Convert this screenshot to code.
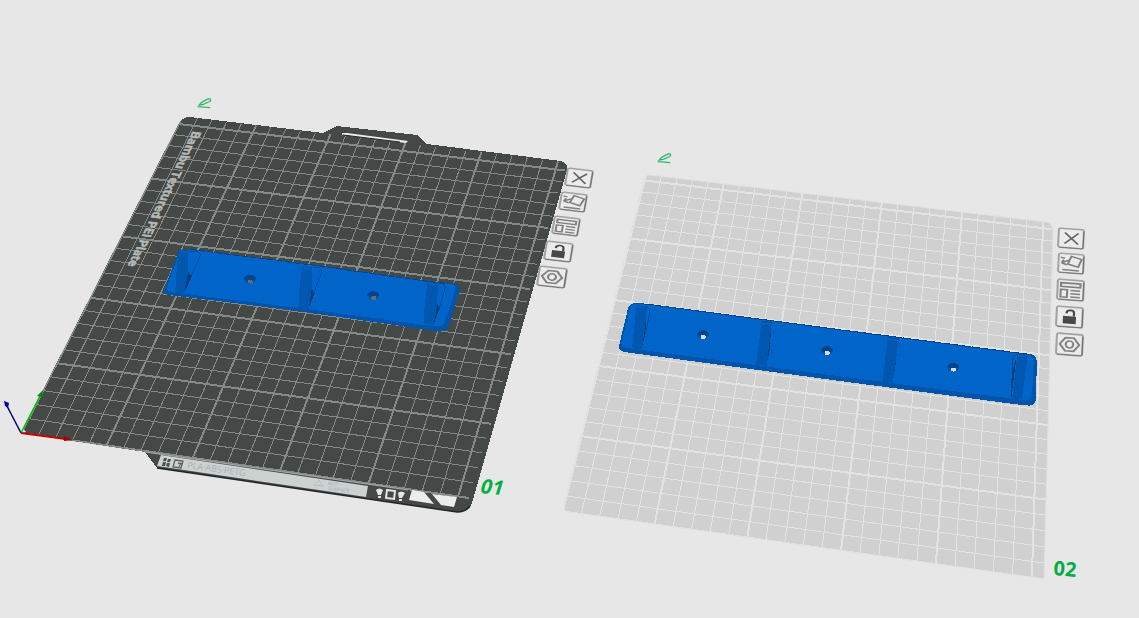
import type { ReactNode } from "react";

type Point = [number, number];
type Quad = [Point, Point, Point, Point];

const VIEW_W = 1139;
const VIEW_H = 618;

// Bed size in millimetres covered by the reference corners
const BED_X = 256;
const BED_Y = 250;

// Projects bed coordinates to the screen; corners are origin, +x, +x+y, +y
function createProjection([p0, p1, p2, p3]: Quad) {
  const dx1 = p1[0] - p2[0];
  const dx2 = p3[0] - p2[0];
  const dx3 = p0[0] - p1[0] + p2[0] - p3[0];
  const dy1 = p1[1] - p2[1];
  const dy2 = p3[1] - p2[1];
  const dy3 = p0[1] - p1[1] + p2[1] - p3[1];
  const det = dx1 * dy2 - dx2 * dy1;
  const g = (dx3 * dy2 - dx2 * dy3) / det;
  const h = (dx1 * dy3 - dx3 * dy1) / det;
  const a = p1[0] - p0[0] + g * p1[0];
  const b = p3[0] - p0[0] + h * p3[0];
  const d = p1[1] - p0[1] + g * p1[1];
  const e = p3[1] - p0[1] + h * p3[1];

  return (x: number, y: number): Point => {
    const u = x / BED_X;
    const v = y / BED_Y;
    const w = g * u + h * v + 1;
    return [(a * u + b * v + p0[0]) / w, (d * u + e * v + p0[1]) / w];
  };
}

const STEPS = Array.from({ length: 26 }, (_, i) => i * 10);

interface BedGridProps {
  corners: Quad;
  color: string;
  clipId: string;
}

function BedGrid({ corners, color, clipId }: BedGridProps) {
  const project = createProjection(corners);

  const line = (key: string, from: Point, to: Point, major: boolean) => (
    <line
      key={key}
      x1={from[0]}
      y1={from[1]}
      x2={to[0]}
      y2={to[1]}
      stroke={color}
      strokeWidth={major ? 2 : 1}
    />
  );

  return (
    <g clipPath={`url(#${clipId})`} shapeRendering="crispEdges">
      {STEPS.map((s) => line(`x${s}`, project(s, 0), project(s, 257), s % 50 === 0))}
      {STEPS.map((s) => line(`y${s}`, project(0, s), project(256, s), s % 50 === 0))}
    </g>
  );
}

const PLATE_1: Quad = [[21.5, 433], [469, 498], [565, 170.5], [179, 124]];
const PLATE_2: Quad = [[563, 511.5], [1043.5, 579.5], [1052.7, 229.3], [644.5, 180.5]];

const PLATE_1_PATH =
  "M21 433 L178 125 Q182 117 190 117 L323 133 L337 126 L417 135 L427 144 L561 161 Q568 163 567 170 L472 503 Q468 513 457 512 L157 468 L145 452 Z";
const PLATE_2_PATH =
  "M564 505 L644 180 Q645 175 650 175 L1046 222 Q1053 223 1053 231 L1044 579 L569 512 Q563 511 564 505 Z";

interface PostProps {
  body: string;
  cap: string;
  shadow: string;
  groove: string;
}

function Post({ body, cap, shadow, groove }: PostProps) {
  return (
    <g>
      <polyline points={groove} fill="none" stroke="#004a96" strokeWidth="2.5" />
      <polygon points={shadow} fill="#003c7a" />
      <polygon points={body} fill="#0057b0" />
      <polygon points={cap} fill="#0061c2" stroke="#004a96" strokeWidth="1.5" />
    </g>
  );
}

function Hole({ x, y, fill }: { x: number; y: number; fill: string }) {
  return (
    <g>
      <ellipse cx={x} cy={y} rx="18" ry="13" fill="#0055aa" />
      <path d={`M${x - 18} ${y - 2}q2 -11 18 -11t18 11l-9 6l-18 0z`} fill="#00458c" />
      <ellipse cx={x + 1} cy={y + 7} rx="8" ry="6" fill={fill} />
    </g>
  );
}

function ShortBracket() {
  return (
    <g transform="translate(155 240) scale(0.333333)" shapeRendering="crispEdges">
      <path
        d="M70 35L80 30L105 27L135 31L470 73L830 124L895 130Q915 134 914 152L910 165L880 260Q872 276 850 274L820 270L430 213L50 166Q25 165 26 150L33 135Z"
        fill="#0055ab"
      />
      <path
        d="M72 42L90 32L120 30L470 76L830 127L888 132Q904 136 900 152L870 246Q865 260 848 259L810 255L440 205L52 157Q32 154 36 138Z"
        fill="#0064c8"
      />
      <path d="M105 28L470 75L830 126L880 131" fill="none" stroke="#004488" strokeWidth="3" strokeDasharray="18 8" />
      <Post
        body="70,34 100,36 99,100 88,158 61,158 63,110"
        cap="70,33 78,30 100,33 97,40 72,38"
        shadow="99,95 110,110 92,150 86,150"
        groove="105,33 128,35 136,42 134,52 106,112"
      />
      <Post
        body="441,84 471,86 470,150 461,208 430,205 433,150"
        cap="441,84 449,80 472,83 468,90 443,88"
        shadow="470,148 479,160 462,202 458,202"
        groove="478,82 492,84 500,92 498,102 474,165"
      />
      <Post
        body="817,132 848,134 847,195 836,254 806,253 809,195"
        cap="817,132 825,127 849,131 844,138 819,136"
        shadow="847,195 854,205 838,247 834,247"
        groove="852,129 864,132 871,141 869,150 850,212"
      />
      <Hole x={285} y={118} fill="#686b66" />
      <Hole x={655} y={167} fill="#686b66" />
    </g>
  );
}

function LongBracket() {
  return (
    <g transform="translate(550 140) scale(0.333333)" shapeRendering="crispEdges">
      <path
        d="M234 505Q240 489 260 489L300 492L870 568L1420 640L1445 642Q1461 650 1461 668L1457 780Q1455 797 1438 797L1390 792L870 723L230 637Q207 635 207 618Z"
        fill="#0055ab"
      />
      <path
        d="M240 505Q245 492 260 492L300 495L870 571L1420 643L1437 645Q1452 651 1451 668L1446 765Q1442 782 1424 781L1380 775L870 709L240 625Q212 625 214 606Z"
        fill="#0064c8"
      />
      <path d="M285 492L870 569L1430 642" fill="none" stroke="#003f80" strokeWidth="3" strokeDasharray="24 6" />
      <Post
        body="259,502 290,504 287,550 275,628 246,625"
        cap="259,502 265,497 290,500 287,507 260,506"
        shadow="288,540 286,580 276,622 274,600"
        groove="291,500 300,512 286,582"
      />
      <Post
        body="634,551 665,553 650,677 618,675"
        cap="634,551 640,545 665,549 661,556 636,555"
        shadow="664,555 658,640 650,670 651,620"
        groove="634,543 665,548"
      />
      <Post
        body="1013,598 1046,600 1028,728 997,725"
        cap="1013,598 1018,593 1046,598 1042,604 1015,602"
        shadow="1045,600 1036,680 1028,724 1029,690"
        groove="1013,592 1046,597"
      />
      <Post
        body="1402,647 1433,649 1415,779 1386,775"
        cap="1402,647 1406,642 1434,647 1430,653 1403,651"
        shadow="1399,650 1386,700 1384,770 1392,710"
        groove="1399,643 1389,655 1383,772"
      />
      <Hole x={459} y={584} fill="#dcdcdc" />
      <Hole x={831} y={632} fill="#dcdcdc" />
      <Hole x={1210} y={682} fill="#dcdcdc" />
    </g>
  );
}

function FrontLabel() {
  return (
    <g>
      <polygon points="161,455 368,486 366,497 157,466" fill="#ccd1d2" />
      <line x1="145" y1="452" x2="408" y2="490" stroke="#a5a9a9" strokeWidth="1" />
      {/* QR code and logo */}
      <g fill="#4b4f4f">
        <polygon points="164,458 167,458 166,461 163,461" />
        <polygon points="168,459 171,459 170,462 167,462" />
        <polygon points="163,462 166,462 165,466 162,466" />
        <polygon points="167,463 170,463 169,467 166,466" />
      </g>
      <path d="M175 460l8 1l-2 7l-8 -1z M178 463l3 .5l-2 3" fill="none" stroke="#5d6161" strokeWidth="1.3" />
      <text
        transform="translate(187 468) rotate(8)"
        fontSize="9"
        fill="#aab0b0"
        fontFamily="'Open Sans', sans-serif"
      >
        PLA·ABS·PETG
      </text>
      <path d="M319 480l4 6l-9 -1z" fill="none" stroke="#b9bebe" strokeWidth="1" />
      <g fontSize="5" fill="#a3a9a9" fontFamily="'Open Sans', sans-serif">
        <text transform="translate(328 485) rotate(8)">HOT</text>
        <text transform="translate(328 490) rotate(8)">SURFACE</text>
      </g>
      {/* Alignment marks */}
      <path d="M376 490q3 -3 7 0l-2 5h-3zM378 496h3v2h-3z" fill="#e6e6e6" />
      <path d="M387 490l8 1l-1 8l-8 -1z" fill="none" stroke="#e6e6e6" strokeWidth="2" />
      <path d="M398 493q3 -3 7 0l-3 5h-3zM399 499h3v2h-3z" fill="#e6e6e6" />
      <polygon points="412,490 424,492 434,504 409,500" fill="#ececec" />
      <polygon points="432,494 457,497 454,507 441,505" fill="#ececec" />
    </g>
  );
}

function Axes() {
  return (
    <g strokeWidth="1.5">
      <path d="M22 427l4 5l-5 1z" fill="#e6e6e6" />
      <line x1="21" y1="433" x2="7" y2="406" stroke="#000078" />
      <polygon points="4,401 9,403 8,408 5,406" fill="#0000a0" />
      <line x1="21" y1="433" x2="41" y2="394" stroke="#00c400" />
      <polygon points="43,390 42,397 37,396" fill="#008a00" />
      <line x1="21" y1="433" x2="66" y2="439" stroke="#c80000" strokeWidth="2" />
      <polygon points="64,436 73,440 64,441" fill="#a00000" />
    </g>
  );
}

const ICONS: Record<string, ReactNode> = {
  remove: <path d="M6 5L19 19M19 5L6 19" stroke="#666666" />,
  orient: (
    <>
      <path d="M12 3L22 6L19 16L9 13Z" />
      <path d="M2 5l4 1M3 12L10 8M3 12l2 -4M3 12l5 2M4 20.500h16" />
    </>
  ),
  arrange: <path d="M3 4H21V8.500H3ZM3 12H9V21H3ZM12 12.500H21M12 16.500H21M12 20.500H21" />,
  unlock: (
    <>
      <rect x="6" y="11" width="12" height="9" fill="#484848" stroke="none" />
      <path d="M9 8Q9 4 12.500 4Q16 4 16 7V11" stroke="#484848" strokeWidth="2" />
    </>
  ),
  settings: (
    <>
      <path d="M8 4.500H16L21 12L16 19.500H8L3 12Z" />
      <ellipse cx="12" cy="12" rx="3.500" ry="4" />
    </>
  ),
};

interface PlateAction {
  icon: string;
  label: string;
  quad: [Point, Point, Point];
}

// Corner order: top left, top right, bottom left
const ACTIONS: PlateAction[] = [
  { icon: "remove", label: "Delete plate 01", quad: [[568, 168], [593, 171], [565, 185]] },
  { icon: "orient", label: "Auto orient plate 01", quad: [[562, 192], [587, 195], [559, 209]] },
  { icon: "arrange", label: "Arrange plate 01", quad: [[555, 216], [580, 219], [552, 233]] },
  { icon: "unlock", label: "Lock plate 01", quad: [[547, 241], [573, 244], [544, 259]] },
  { icon: "settings", label: "Plate 01 settings", quad: [[540, 266], [567, 269], [537, 285]] },
  { icon: "remove", label: "Delete plate 02", quad: [[1059, 228], [1084, 230], [1058, 247]] },
  { icon: "orient", label: "Auto orient plate 02", quad: [[1059, 253], [1084, 255], [1058, 272]] },
  { icon: "arrange", label: "Arrange plate 02", quad: [[1058, 279], [1084, 281], [1057, 299]] },
  { icon: "unlock", label: "Lock plate 02", quad: [[1057, 306], [1083, 308], [1056, 326]] },
  { icon: "settings", label: "Plate 02 settings", quad: [[1057, 333], [1083, 335], [1056, 354]] },
];

// Position on the canvas as a share of its size, so that it follows the window
function place(x: number, y: number, w: number, h: number) {
  return {
    left: `${(x / VIEW_W) * 100}%`,
    top: `${(y / VIEW_H) * 100}%`,
    width: `${(w / VIEW_W) * 100}%`,
    height: `${(h / VIEW_H) * 100}%`,
  };
}

function PlateButton({ action }: { action: PlateAction }) {
  const [tl, tr, bl] = action.quad;
  const x = bl[0] - 1;
  const y = tl[1] - 1;
  const w = tr[0] - bl[0] + 3;
  const h = bl[1] - tl[1] + tr[1] - tl[1] + 3;
  const matrix = [
    (tr[0] - tl[0]) / 24,
    (tr[1] - tl[1]) / 24,
    (bl[0] - tl[0]) / 24,
    (bl[1] - tl[1]) / 24,
    tl[0],
    tl[1],
  ].join(" ");

  return (
    <button aria-label={action.label} className="absolute cursor-pointer" style={place(x, y, w, h)}>
      <svg viewBox={`${x} ${y} ${w} ${h}`} className="block h-full w-full" fill="none">
        <g transform={`matrix(${matrix})`} stroke="#808080" strokeWidth="1.900">
          <rect width="24" height="24" rx="2" fill="#ebebeb" stroke="#a2a2a2" />
          <path d="M1 24H23Q24 24 24 22V2" stroke="#707070" strokeWidth="1" />
          {ICONS[action.icon]}
        </g>
      </svg>
    </button>
  );
}

function RenameButton({ x, y, label }: { x: number; y: number; label: string }) {
  return (
    <button aria-label={label} className="absolute cursor-pointer" style={place(x, y, 16, 12)}>
      <svg viewBox="0 0 48 36" className="block h-full w-full" fill="none" stroke="#35b86a" strokeWidth="4">
        <path d="M7 24L14 16L33 6Q41 4 41 9Q40 13 35 15L19 22Z" />
        <path d="M2 29L40 32" />
      </svg>
    </button>
  );
}

export default function App() {
  return (
    <main className="min-h-screen bg-[#e7e7e7]">
      <div className="relative w-full">
        <svg viewBox={`0 0 ${VIEW_W} ${VIEW_H}`} className="block w-full" role="img" aria-label="Build plates">
          <defs>
            <clipPath id="plate-1">
              <path d={PLATE_1_PATH} />
            </clipPath>
            <clipPath id="plate-2">
              <path d={PLATE_2_PATH} />
            </clipPath>
          </defs>

          {/* Plate 01 */}
          <path d={PLATE_1_PATH} fill="#444847" shapeRendering="crispEdges" />
          <path d="M157 468L457 512Q466 512 470 506" fill="none" stroke="#242727" strokeWidth="1.500" />
          <polygon points="342,133 347,133 408,141 406,143 342,135" fill="#eeeeee" />
          <line x1="343" y1="135" x2="400" y2="142" stroke="#202222" strokeWidth="1" />
          <BedGrid corners={PLATE_1} color="#868a85" clipId="plate-1" />
          <text
            transform="matrix(-0.436 0.9 -0.99 -0.13 193 131)"
            fontSize="12"
            fontWeight="600"
            fill="#b4b7b5"
            stroke="#b4b7b5"
            strokeWidth="0.8"
            fontFamily="'Open Sans', sans-serif"
          >
            Bambu Textured PEI Plate
          </text>
          <FrontLabel />
          <Axes />
          <ShortBracket />

          {/* Plate 02 */}
          <path d={PLATE_2_PATH} fill="#d0d0d0" stroke="#e0e0e0" strokeWidth="1" />
          <BedGrid corners={PLATE_2} color="#e3e3e3" clipId="plate-2" />
          <LongBracket />

          <g fontSize="20" fontWeight="700" fill="#00ae42" fontFamily="'Open Sans', sans-serif">
            <text transform="translate(479 493) rotate(5) skewX(-12)">01</text>
            <text transform="translate(1053 575) rotate(5)">02</text>
          </g>
        </svg>

        <RenameButton x={197} y={97} label="Rename plate 01" />
        <RenameButton x={657} y={152} label="Rename plate 02" />
        {ACTIONS.map((action) => (
          <PlateButton key={action.label} action={action} />
        ))}
      </div>
    </main>
  );
}
